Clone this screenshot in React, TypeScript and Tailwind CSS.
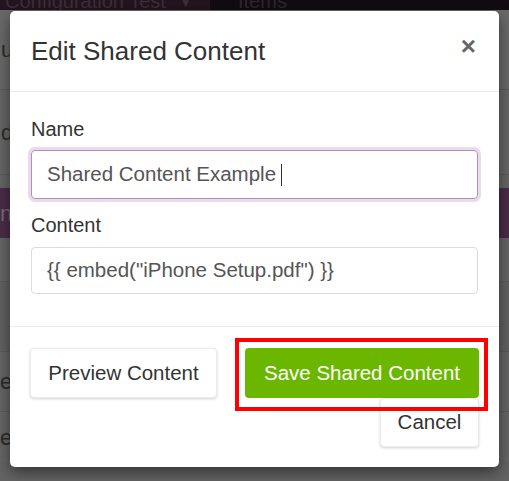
import React from "react";

export default function App() {
  const font = { fontFamily: '"Liberation Sans", Arial, sans-serif' };
  return (
    <div className="relative w-[509px] h-[481px] overflow-hidden bg-[#646464]" style={font}>
      {/* background page (dimmed) */}
      <div className="flex h-[10px] overflow-hidden bg-[#120c12]">
        <div className="flex h-[10px] w-[210px] shrink-0 items-start whitespace-nowrap bg-[#23141f] pl-[5px] text-[20px] leading-[20px] text-[#3e2d3a]">
          <span className="-mt-[9px]">Configuration Test</span>
          <span className="-mt-[7px] ml-[14px] text-[12px] leading-[20px]">▼</span>
        </div>
        <div className="flex h-[10px] items-start whitespace-nowrap pl-[28px] text-[20px] leading-[20px] text-[#2e262c]">
          <span className="-mt-[9px]">Items</span>
        </div>
      </div>
      <div className="flex flex-col text-[22px] text-[#2b2b2b]">
        <div className="flex h-[80px] items-center border-b border-[#5a5a5a] bg-[#6a6a6a] pl-[1px]">u</div>
        <div className="flex h-[85px] items-center border-b border-[#5c5c5c] bg-[#676767] pl-[1px]">d</div>
        <div className="flex h-[13px] bg-[#666666]" />
        <div className="flex h-[50px] items-center bg-[#4a2d48] text-[#7c6a7a]">nt</div>
        <div className="h-[44px] border-b border-[#5c5c5c] bg-[#666666]" />
        <div className="h-[70px] border-b border-[#5c5c5c] bg-[#626262]" />
        <div className="flex h-[60px] items-center border-b border-[#5c5c5c] bg-[#666666]">e</div>
        <div className="flex h-[50px] items-center bg-[#666666]">e</div>
      </div>

      {/* modal */}
      <div className="absolute left-[10px] top-[11px] flex h-[456px] w-[489px] flex-col rounded-[5px] bg-white shadow-[0_5px_15px_rgba(0,0,0,0.5)]">
        <div className="flex h-[81px] shrink-0 items-center justify-between border-b border-[#ececec] pl-[21px] pr-[23px]">
          <span className="text-[26px] leading-none text-[#333]">Edit Shared Content</span>
          <span className="-mt-[10px] text-[26px] font-bold leading-none text-[#666]">×</span>
        </div>
        <div className="flex flex-col px-[21px] pt-[25px] pb-[32px] border-b border-[#ececec]">
          <label className="text-[20px] leading-[24px] text-[#333]">Name</label>
          <div className="mt-[9px] flex h-[49px] items-center rounded-[4px] border border-[#b48dbd] pl-[15px] text-[20.5px] text-[#555] shadow-[0_0_0_3px_rgba(180,140,190,0.3)]">
            <span>Shared Content Example</span>
            <span className="ml-[5px] h-[22px] w-[1px] bg-[#333]" />
          </div>
          <label className="mt-[14px] text-[20px] leading-[24px] text-[#333]">Content</label>
          <div className="mt-[10px] flex h-[47px] items-center rounded-[4px] border border-[#dcdcdc] pl-[15px] text-[20.5px] text-[#555]">
            {'{{ embed("iPhone Setup.pdf") }}'}
          </div>
        </div>
        <div className="flex justify-between px-[20px] pt-[21px]">
          <div className="flex h-[50px] w-[187px] items-center justify-center rounded-[4px] border border-[#ececec] bg-white text-[20.5px] text-[#333] shadow-[0_1px_3px_rgba(0,0,0,0.18)]">
            Preview Content
          </div>
          <div className="flex flex-col items-end">
            <div className="flex h-[50px] w-[234px] items-center justify-center rounded-[4px] bg-[#6bb700] text-[20.5px] text-white">
              Save Shared Content
            </div>
            <div className="flex h-[49px] w-[99px] items-center justify-center rounded-[4px] border border-[#ececec] bg-white text-[20.5px] text-[#333] shadow-[0_1px_3px_rgba(0,0,0,0.18)]">
              Cancel
            </div>
          </div>
        </div>
      </div>
      {/* annotation highlight */}
      <div className="pointer-events-none absolute left-[235px] top-[338px] h-[73px] w-[253px] border-4 border-[#ff0000]" />
    </div>
  );
}
